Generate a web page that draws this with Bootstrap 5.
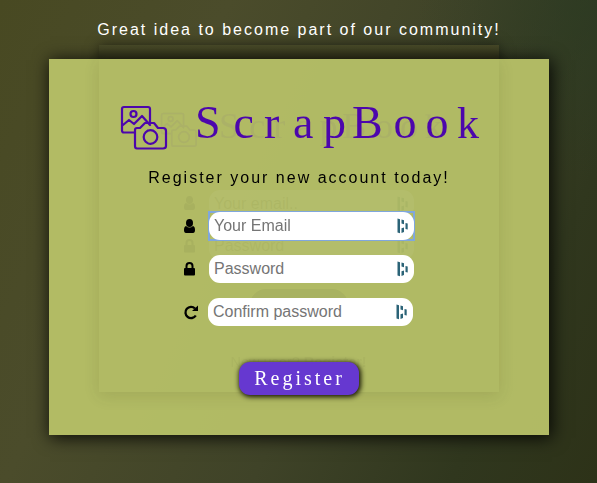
<!DOCTYPE html>
<html lang="en">
<head>
<meta charset="utf-8">
<meta name="viewport" content="width=device-width, initial-scale=1">
<title>ScrapBook</title>
<link href="https://cdn.jsdelivr.net/npm/bootstrap@5.3.0/dist/css/bootstrap.min.css" rel="stylesheet">
<style>
body{height:483px;overflow:hidden;font-family:"Liberation Sans",Arial,sans-serif;color:#000;
 background:radial-gradient(circle at 100% 0,rgba(40,58,35,.6),transparent 180px),linear-gradient(115deg,#484922 0%,#4b4c2b 28%,#3f4328 58%,#30371e 82%,#2d3218 100%)}
.intro{height:59px;padding-top:20px;padding-left:1px;font-size:16px;line-height:20px;letter-spacing:2px;color:#fff;white-space:nowrap;position:relative;z-index:2}
.stage{width:500px}
.panel{height:376px;background:rgba(182,192,103,.96);box-shadow:2px 2px 16px 1px rgba(0,0,0,.85);z-index:1}
.under{left:50px;top:-14px;width:400px;height:347px;box-shadow:0 0 12px 0 rgba(0,0,0,.5);z-index:1;
 background:linear-gradient(rgba(72,74,40,.9),rgba(50,51,27,.9) 14px,transparent 14px)}
.under-shade{left:50px;top:0;width:400px;height:333px;background:rgba(176,185,99,.5);box-shadow:0 4px 15px rgba(60,60,20,.12)}
.ghost{left:0;top:0;width:500px;height:376px;opacity:.05}
.ghost .field{position:absolute;left:160px}
.ghost-link{left:182px;top:293px;font-size:14.5px;opacity:.6}
.ghost-button{left:201px;top:230px;width:98px;height:32px}
.content{height:376px;padding-top:41px}
.brand{width:364px;height:56px;margin-left:71px;overflow:visible}
.tagline{font-size:16px;line-height:20px;letter-spacing:2px;margin-top:12px;padding-left:1px;white-space:nowrap}
.rows{margin-top:24px;padding-left:133px;gap:15px}
.glyph{width:16px;height:16px;margin-right:11px}
.field{width:205px;height:28px;border-radius:11px;background:#fff;padding:0 5px 0 5.500px;font-size:16px;line-height:28px;color:#757575}
.focus-wrap{height:28px;width:205px;box-shadow:0 0 0 1px #80a7dd,inset 0 0 0 1px #80a7dd}
.focus-wrap .field{background-clip:padding-box}
.third{margin-left:-1px}
.submit{width:120px;height:33px;border:0;border-radius:11px;background:#6638d0;color:#fff;font:20px/33px "Liberation Serif","Times New Roman",serif;letter-spacing:3px;padding:0 0 0 2px;margin:36px 0 0 190px;box-shadow:1px 1px 5px 1px #171704}
</style>
<script src="https://cdn.jsdelivr.net/npm/bootstrap@5.3.0/dist/js/bootstrap.bundle.min.js"></script>
</head>
<body>
<svg class="d-none">
 <symbol id="logo" viewBox="0 0 364 56">
  <g fill="none" stroke="#4c06ac" stroke-width="2.200" stroke-linejoin="round" stroke-linecap="round">
   <path d="M14 32.500H4q-2 0-2-2V9q0-2 2-2h24q2 0 2 2v14M3 25l6-5 5 4 8-8 8 9"/>
   <circle cx="13.500" cy="14" r="3"/>
   <path d="M17 28h3l5-5h9l4 5h5q3 0 3 3v15q0 2.500-3 2.500H17q-2 0-2-2.500V30q0-2 2-2z"/>
   <circle cx="30.500" cy="37" r="6.800"/>
  </g>
  <g font-family="Liberation Serif, Times New Roman, serif" font-size="46" fill="#4c06ac">
   <text y="38" x="75 113.500 144 173 203 232 273.500 305.500 337">ScrapBoo<tspan font-size="44">k</tspan></text>
  </g>
 </symbol>
 <symbol id="user" viewBox="0 0 16 16"><ellipse cx="7.500" cy="5" rx="3.500" ry="4"/><path d="M4 8Q2 8.500 2 12q0 3 2 3h7q2 0 2-3 0-3.500-2-4Q7.500 11 4 8z"/></symbol>
 <symbol id="lock" viewBox="0 0 16 16"><path d="M4.500 8V5a3 3 0 0 1 6 0v3" fill="none" stroke="currentColor" stroke-width="2"/><rect x="2" y="7" width="11" height="7.500" rx="1"/></symbol>
 <symbol id="again" viewBox="0 0 16 16"><path d="M13.800 11.500A5.600 5.600 0 1 1 13 4.500" fill="none" stroke="currentColor" stroke-width="2.300"/><path d="M16 1.500V7h-6z"/></symbol>
 <symbol id="dash" viewBox="0 0 12 16"><path d="M.5 .5l2.500.8v14l-2.500-.8zM4.500 1.500l2.500.8v4l-2.500-.8zM8.500 5l2.200.6v6l-2.200-.6zM4.500 10.200l2.500-.6v4.500l-2.500.8z" fill="#2b6377"/></symbol>
</svg>
<p class="intro text-center m-0">Great idea to become part of our community!</p>
<main class="stage position-relative mx-auto">
 <div class="under position-absolute"></div>
 <div class="panel position-relative">
  <div class="under-shade position-absolute"></div>
  <div class="ghost position-absolute" aria-hidden="true">
   <svg class="position-absolute" style="left:110px;top:49px" width="288" height="44"><use href="#logo"/></svg>
   <svg class="position-absolute" style="left:133px;top:136px" width="16" height="16"><use href="#user"/></svg>
   <svg class="position-absolute" style="left:133px;top:179px" width="16" height="16"><use href="#lock"/></svg>
   <div class="field d-flex justify-content-between align-items-center" style="top:131px">Your email..<svg width="12" height="16"><use href="#dash"/></svg></div>
   <div class="field d-flex justify-content-between align-items-center" style="top:173px">Password<svg width="12" height="16"><use href="#dash"/></svg></div>
   <div class="ghost-button position-absolute bg-dark rounded-4"></div>
   <div class="ghost-link position-absolute text-nowrap">New user? <b>Register!</b></div>
  </div>
  <div class="content position-relative">
   <svg class="brand d-block" role="img" aria-label="ScrapBook"><use href="#logo"/></svg>
   <p class="tagline text-center mb-0">Register your new account today!</p>
   <div class="rows d-flex flex-column">
    <div class="d-flex align-items-center"><svg class="glyph"><use href="#user"/></svg>
     <div class="focus-wrap"><div class="field d-flex justify-content-between align-items-center">Your Email<svg width="12" height="16"><use href="#dash"/></svg></div></div></div>
    <div class="d-flex align-items-center"><svg class="glyph"><use href="#lock"/></svg>
     <div class="field d-flex justify-content-between align-items-center">Password<svg width="12" height="16"><use href="#dash"/></svg></div></div>
    <div class="d-flex align-items-center"><svg class="glyph"><use href="#again"/></svg>
     <div class="field third d-flex justify-content-between align-items-center">Confirm password<svg width="12" height="16"><use href="#dash"/></svg></div></div>
   </div>
   <button class="submit d-block" type="button">Register</button>
  </div>
 </div>
</main>
</body>
</html>
